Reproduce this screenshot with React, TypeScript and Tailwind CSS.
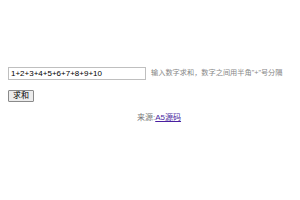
export default function App() {
  return (
    <div className="h-[200px] w-[300px] bg-white font-['Liberation_Sans','Noto_Sans_CJK_SC',sans-serif]">
      <div className="px-2 pt-[67px]">
        <div className="flex items-center">
          <input
            className="h-[13px] w-[138px] border border-[#bfbfbf] px-[2px] text-[8px] text-black outline-none"
            defaultValue="1+2+3+4+5+6+7+8+9+10"
          />
          <span className="ml-[5px] whitespace-nowrap text-[7.2px] text-[#888888]">
            输入数字求和，数字之间用半角"+"号分隔
          </span>
        </div>
        <button className="mt-[10px] h-[12px] w-[26px] rounded-[1px] border border-[#8a8a8a] bg-[#ececec] text-[8px] leading-none text-black">
          求和
        </button>
        <div className="mt-[7px] pl-[129px] text-[8px] text-[#777777]">
          来源:<a href="#" className="text-[#4a1fa0] underline">A5源码</a>
        </div>
      </div>
    </div>
  );
}
